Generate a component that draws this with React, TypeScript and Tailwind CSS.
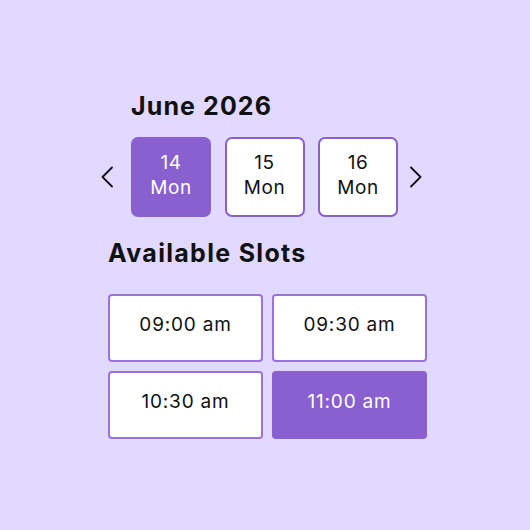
import { useState } from "react";

// ── Data ─────────────────────────────────────────────────────────────────────

const days = [
  { date: "14", day: "Mon" },
  { date: "15", day: "Mon" },
  { date: "16", day: "Mon" },
];

const slots = ["09:00 am", "09:30 am", "10:30 am", "11:00 am"];

// ── Chevron ──────────────────────────────────────────────────────────────────

function Chevron({ dir }: { dir: "left" | "right" }) {
  return (
    <svg width="14" height="22" viewBox="0 0 14 22" fill="none" className="text-[#111]">
      <path
        d={dir === "left" ? "M12 1.5 2.5 11l9.5 9.5" : "M2 1.5l9.5 9.5L2 20.5"}
        stroke="currentColor"
        strokeWidth="1.8"
        strokeLinecap="round"
        strokeLinejoin="round"
      />
    </svg>
  );
}

// ── Main ─────────────────────────────────────────────────────────────────────

export default function App() {
  const [selectedDay, setSelectedDay] = useState(0);
  const [selectedSlot, setSelectedSlot] = useState(3);

  return (
    <div className="w-[530px] h-[530px] bg-[#e1d9ff] font-['Inter',sans-serif] text-[#111]">
      <div className="pt-[91px] pl-[100px]">
        <h1 className="ml-[31px] text-[25px] font-bold leading-[30px] tracking-[1.1px]">
          June 2026
        </h1>

        {/* Day picker */}
        <div className="mt-[16px] flex items-center">
          <button className="w-[16px] flex justify-start">
            <Chevron dir="left" />
          </button>
          <div className="ml-[15px] flex gap-[13.5px]">
            {days.map((d, i) => (
              <button
                key={d.date}
                onClick={() => setSelectedDay(i)}
                className={
                  "w-[80px] h-[80px] pb-[4px] rounded-[7px] flex flex-col items-center justify-center text-[19px] leading-[25px] tracking-[0.6px] " +
                  (i === selectedDay
                    ? "bg-[#8a5fd0] text-white"
                    : "bg-white border-2 border-[#8a5fd0] text-[#111]")
                }
              >
                <span>{d.date}</span>
                <span>{d.day}</span>
              </button>
            ))}
          </div>
          <button className="ml-[11px] w-[16px] flex justify-start">
            <Chevron dir="right" />
          </button>
        </div>

        {/* Slots */}
        <h2 className="mt-[21px] ml-[8px] text-[25px] font-bold leading-[30px] tracking-[1.3px]">
          Available Slots
        </h2>
        <div className="mt-[26px] ml-[8px] w-[319px] grid grid-cols-2 gap-x-[9px] gap-y-[9px]">
          {slots.map((s, i) => (
            <button
              key={s}
              onClick={() => setSelectedSlot(i)}
              className={
                "h-[68px] pb-[6px] rounded-[4px] flex items-center justify-center text-[19px] tracking-[0.8px] " +
                (i === selectedSlot
                  ? "bg-[#8a5fd0] text-white"
                  : "bg-white border-2 border-[#9a72da] text-[#111]")
              }
            >
              {s}
            </button>
          ))}
        </div>
      </div>
    </div>
  );
}
